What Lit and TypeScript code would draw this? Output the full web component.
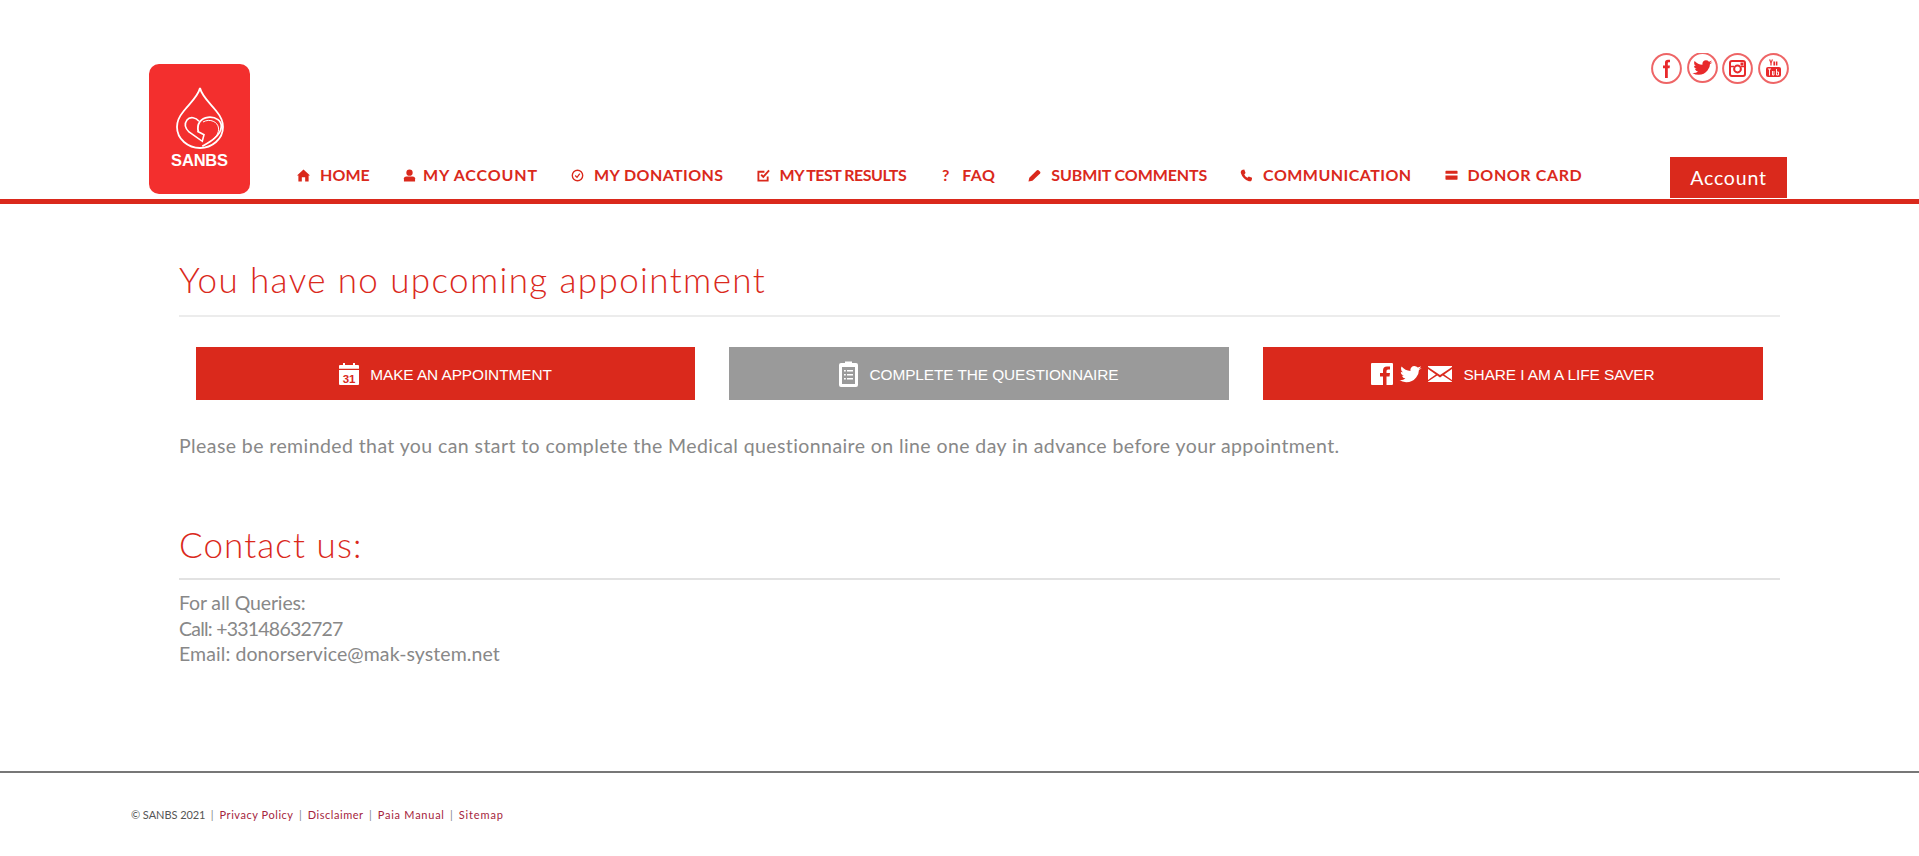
import { LitElement, html, css, svg } from "lit";
import { customElement } from "lit/decorators.js";

const navIcons = {
  home: svg`<path d="M7 0.5 L14 7 L12.5 7 L12.5 13.5 L8.8 13.5 L8.8 9 L5.2 9 L5.2 13.5 L1.5 13.5 L1.5 7 L0 7 Z"/>`,
  user: svg`<circle cx="7" cy="4" r="3.4"/><path d="M1 13.5 L1 10 Q1 8 3.6 8 L10.4 8 Q13 8 13 10 L13 13.5 Z"/>`,
  clock: svg`<circle cx="7" cy="7" r="5.6" fill="none" stroke="currentColor" stroke-width="1.5"/><path d="M4.5 7 L6.5 9 L9.5 5" fill="none" stroke="currentColor" stroke-width="1.4"/>`,
  check: svg`<path d="M11.5 8 L11.5 12.5 L1.5 12.5 L1.5 3 L8 3" fill="none" stroke="currentColor" stroke-width="2"/><path d="M4.5 6.2 L6.8 8.5 L13 1.5" fill="none" stroke="currentColor" stroke-width="2"/>`,
  pencil: svg`<path d="M0.5 13.5 L1.4 9.4 L9.6 1.4 Q10.5 0.6 11.4 1.4 L13 3 Q13.8 4 13 4.8 L4.8 12.6 Z"/>`,
  phone: svg`<path d="M2 1 L4.6 0.5 L6 4.4 L4.6 5.8 Q5.6 8.2 8 9.4 L9.4 8 L13 9.4 L12.6 12 Q11.6 13.6 9.6 13.2 Q3 11 0.8 4 Q0.6 2.2 2 1 Z"/>`,
  card: svg`<path d="M0.5 2.5 Q0.5 2 1.1 2 L12.9 2 Q13.5 2 13.5 2.5 L13.5 5 L0.5 5 Z M0.5 7 L13.5 7 L13.5 11 Q13.5 11.5 12.9 11.5 L1.1 11.5 Q0.5 11.5 0.5 11 Z"/>`,
};

const nav: [string, keyof typeof navIcons | null, number, boolean][] = [
  ["HOME", "home", 0.08, false],
  ["MY ACCOUNT", "user", 0.87, true],
  ["MY DONATIONS", "clock", 0.42, false],
  ["MY TEST RESULTS", "check", -0.5, false],
  ["FAQ", null, 0.43, false],
  ["SUBMIT COMMENTS", "pencil", -0.11, false],
  ["COMMUNICATION", "phone", 0.45, false],
  ["DONOR CARD", "card", 0.61, false],
];

const fGlyph = svg`<path d="M16.6 8.6 Q16.6 5.8 19.6 5.8 L21.6 5.8 L21.6 8.3 L20.2 8.3 Q19.4 8.3 19.4 9.2 L19.4 11.6 L21.5 11.6 L21.2 14.2 L19.4 14.2 L19.4 24 L16.6 24 L16.6 14.2 L14.6 14.2 L14.6 11.6 L16.6 11.6 Z"/>`;
const birdPath =
  "M24 7.2 Q22.6 7.8 21.4 8 Q22.8 7.1 23.3 5.6 Q22 6.4 20.5 6.7 Q19.2 5.3 17.4 5.3 Q14.2 5.6 13.9 8.8 Q13.9 9.3 14 9.8 Q9.2 9.5 6.1 5.9 Q5.6 6.8 5.6 7.9 Q5.6 9.9 7.2 11 Q6.2 11 5.4 10.5 Q5.4 13.2 8.1 14 Q7.2 14.2 6.4 14 Q7.2 16.2 9.5 16.4 Q7.4 18.2 4.6 18 Q4.2 18 3.9 17.9 Q6.8 19.8 10.2 19.8 Q15.8 19.8 19 15.6 Q21.6 12.2 21.5 8.9 Q23 8.2 24 7.2 Z";

@customElement("app-root")
export class AppRoot extends LitElement {
  static styles = css`
    :host {
      display: flex;
      flex-direction: column;
      background: #fff;
      color: #888;
      font-family: Lato, "Open Sans", sans-serif;
      height: 856px;
      overflow: hidden;
    }
    .header {
      height: 199px;
      flex: none;
      border-bottom: 5px solid #da291c;
      padding: 0 132px 0 149px;
      display: flex;
      align-items: flex-end;
    }
    .logo {
      width: 101px;
      height: 130px;
      background: #f32f2e;
      border-radius: 10px;
      margin-bottom: 5px;
      flex: none;
      display: flex;
      flex-direction: column;
      align-items: center;
      color: #fff;
    }
    .logo svg { margin-top: 23px; display: block; }
    .logo span {
      font: bold 16.5px "Liberation Sans", sans-serif;
      letter-spacing: -0.2px;
      margin-top: 2px;
      line-height: 18px;
    }
    .nav {
      display: flex;
      gap: 33px;
      margin-left: 47px;
      margin-bottom: 14px;
      flex: none;
    }
    .nav-item {
      display: flex;
      align-items: center;
      gap: 10px;
      color: #da291c;
      font-weight: 700;
      font-size: 16px;
      line-height: 20px;
      white-space: nowrap;
    }
    .nav-item.tight { gap: 7px; }
    .nav-icon { width: 13px; height: 13px; fill: currentColor; flex: none; }
    .q { width: 13px; text-align: center; font-size: 16px; }
    .right {
      margin-left: auto;
      display: flex;
      flex-direction: column;
      align-items: flex-end;
      height: 100%;
      flex: none;
    }
    .social { display: flex; gap: 4.7px; margin-top: 52.5px; margin-right: -2px; }
    .social svg { width: 31px; height: 31px; display: block; color: #e8292b; }
    .ring { fill: none; stroke: currentColor; stroke-opacity: 0.72; stroke-width: 2; }
    .account {
      margin-top: auto;
      margin-bottom: 1px;
      width: 117px;
      height: 41px;
      background: #da291c;
      color: #fff;
      font-size: 19.5px;
      font-weight: 400;
      letter-spacing: 0.8px;
      display: flex;
      align-items: center;
      justify-content: center;
    }
    .main { padding: 0 139px 0 179px; }
    h2 {
      margin: 0;
      font-weight: 300;
      color: #da291c;
      font-size: 35px;
      line-height: 44px;
      border-bottom: 2px solid #ececec;
    }
    h2.first { padding: 53px 0 14px; letter-spacing: 1.39px; }
    h2.second {
      margin-top: 64px;
      padding: 0 0 12px;
      letter-spacing: 1.1px;
      border-bottom-color: #e2e2e2;
    }
    .buttons {
      display: grid;
      grid-template-columns: 499px 500px 500px;
      gap: 34px;
      padding: 30px 17px 0;
    }
    .btn {
      height: 53px;
      background: #da291c;
      color: #fff;
      display: flex;
      align-items: center;
      justify-content: center;
      gap: 11px;
      font: 15.4px "Liberation Sans", sans-serif;
      letter-spacing: -0.08px;
    }
    .btn span { padding-top: 2px; }
    .btn.gray { background: #9a9a9a; }
    .btn svg { display: block; fill: #fff; }
    .icons { display: flex; gap: 6px; align-items: center; }
    p {
      margin: 0;
      font-size: 19.5px;
      line-height: 25px;
      font-weight: 400;
    }
    .note { margin-top: 33px; letter-spacing: 0.41px; }
    .contact { margin-top: 10px; line-height: 25.5px; }
    .l1 { letter-spacing: -0.14px; }
    .l2 { letter-spacing: -0.77px; }
    .l3 { letter-spacing: 0.08px; }
    .footer {
      margin-top: auto;
      box-sizing: border-box;
      height: 85px;
      flex: none;
      border-top: 2px solid #777;
      padding: 33px 0 0 131px;
      font-size: 11px;
      line-height: 18px;
      color: #555;
      letter-spacing: 0.55px;
    }
    .copy { letter-spacing: -0.05px; }
    .footer a { color: #a5243c; text-decoration: none; }
    .sep { color: #888; margin: 0 5.4px; }
    .paia { letter-spacing: 0.75px; }
    .sitemap { letter-spacing: 0.85px; }
  `;

  render() {
    return html`
      <div class="header">
        <div class="logo">
          <svg width="50" height="62" viewBox="0 0 50 62" fill="none" stroke="#fff">
            <path d="M25 1 C27 10 37 18 42 25 C47 31 48 36 48 40 C48 52 37 61 25 61 C13 61 2 52 2 40 C2 36 3 31 8 25 C13 18 23 10 25 1 Z" stroke-width="1.8"/>
            <path d="M23.3 44.3 C21.5 37 26 31 33 30.3 C41 29.5 47 34 46.3 40 C45.5 49 35 55 27.3 59.3" stroke-width="1.8"/>
            <path d="M24 34.3 C21 30.5 15 29 12 33 C9 37 10.5 41.5 14 45 L27.3 54.3 L29 47.7 L22.3 44.3" stroke-width="1.6"/>
            <path d="M28 35 C35 31 43 35 43.5 41 C44 46 41 50 38 52" stroke-width="1"/>
          </svg>
          <span>SANBS</span>
        </div>
        <div class="nav">
          ${nav.map(
            ([label, icon, ls, tight]) => html`<div class="nav-item ${tight ? "tight" : ""}">
              ${icon
                ? html`<svg class="nav-icon" viewBox="0 0 14 14">${navIcons[icon]}</svg>`
                : html`<span class="q">?</span>`}
              <span style="letter-spacing:${ls}px">${label}</span>
            </div>`
          )}
        </div>
        <div class="right">
          <div class="social">
            <svg viewBox="0 0 31 31" fill="currentColor">
              <circle class="ring" cx="15.5" cy="15.5" r="14.4"/>
              <g transform="translate(-2.6 1)">${fGlyph}</g>
            </svg>
            <svg viewBox="0 0 31 31" fill="currentColor">
              <circle class="ring" cx="15.5" cy="14.5" r="14.4"/>
              <g transform="translate(1.5 2)"><path d="${birdPath}"/></g>
            </svg>
            <svg viewBox="0 0 31 31" fill="none" stroke="currentColor">
              <circle class="ring" cx="15.5" cy="15.5" r="14.4"/>
              <rect x="8" y="8" width="15" height="15" rx="2" stroke-width="2"/>
              <circle cx="15.5" cy="16" r="3.4" stroke-width="2"/>
              <rect x="18.5" y="9.5" width="3" height="3" fill="currentColor" stroke="none"/>
              <path d="M8 13.5 H12 M19 13.5 H23" stroke-width="1.4"/>
            </svg>
            <svg viewBox="0 0 31 31" fill="currentColor">
              <circle class="ring" cx="15.5" cy="15.5" r="14.4"/>
              <path d="M11 6.5 L12.4 6.5 L13 9 L13.7 6.5 L15 6.5 L13.6 10 L13.6 12.5 L12.4 12.5 L12.4 10 Z M15.4 8.5 L17 8.5 L17 12.5 L15.4 12.5 Z M17.8 8.5 L19.4 8.5 L19.4 12.5 L17.8 12.5 Z"/>
              <rect x="8" y="14" width="15" height="10" rx="2"/>
              <path d="M10 16 H13 M11.5 16 V22.5 M14.5 18 V22 H16 V18 M18.5 16 V22 H20.5 V19 H18.5" fill="none" stroke="#fff" stroke-width=".9"/>
            </svg>
          </div>
          <div class="account">Account</div>
        </div>
      </div>

      <div class="main">
        <h2 class="first">You have no upcoming appointment</h2>
        <div class="buttons">
          <div class="btn">
            <svg width="20" height="22" viewBox="0 0 20 22">
              <path d="M1 2 H4 V0 H6 V2 H14 V0 H16 V2 H19 Q20 2 20 3 V5.8 H0 V3 Q0 2 1 2 Z"/>
              <path d="M0 7 H20 V21 Q20 22 19 22 H1 Q0 22 0 21 Z"/>
              <text x="10" y="19.5" text-anchor="middle" font-family="Liberation Sans" font-weight="700" font-size="11.5" fill="#da291c">31</text>
            </svg>
            <span>MAKE AN APPOINTMENT</span>
          </div>
          <div class="btn gray">
            <svg width="19" height="26" viewBox="0 0 19 26">
              <path fill-rule="evenodd" d="M6 2 V0.5 H13 V2 H17 Q19 2 19 4 V24 Q19 26 17 26 H2 Q0 26 0 24 V4 Q0 2 2 2 Z M3 6 V23 H16 V6 Z"/>
              <path d="M5 9 H6.8 V10.6 H5 Z M8 9 H14 V10.6 H8 Z M5 13 H6.8 V14.6 H5 Z M8 13 H14 V14.6 H8 Z M5 17 H6.8 V18.6 H5 Z M8 17 H14 V18.6 H8 Z"/>
            </svg>
            <span>COMPLETE THE QUESTIONNAIRE</span>
          </div>
          <div class="btn">
            <div class="icons">
              <svg width="22" height="22" viewBox="0 0 22 22">
                <path d="M1 0 H21 Q22 0 22 1 V21 Q22 22 21 22 H15.5 V13.5 H18.5 L19 10 H15.5 V8 Q15.5 6.5 17 6.5 H19 V3.5 H16 Q12 3.5 12 7.5 V10 H9 V13.5 H12 V22 H1 Q0 22 0 21 V1 Q0 0 1 0 Z"/>
              </svg>
              <svg width="23" height="18" viewBox="3.8 5 20.4 15">
                <path d="${birdPath}"/>
              </svg>
              <svg width="24" height="16" viewBox="0 0 24 16">
                <path d="M0 1 L0 0 H24 V1 L12 9 Z M0 3 L7.8 8.4 L0 14 Z M24 3 L16.2 8.4 L24 14 Z M0 16 V15.5 L9.2 9.6 L12 11.4 L14.8 9.6 L24 15.5 V16 Z"/>
              </svg>
            </div>
            <span>SHARE I AM A LIFE SAVER</span>
          </div>
        </div>
        <p class="note">Please be reminded that you can start to complete the Medical questionnaire on line one day in advance before your appointment.</p>
        <h2 class="second">Contact us:</h2>
        <p class="contact"><span class="l1">For all Queries:</span><br /><span class="l2">Call: +33148632727</span><br /><span class="l3">Email: donorservice@mak-system.net</span></p>
      </div>

      <div class="footer">
        <span class="copy">© SANBS 2021</span><span class="sep">|</span><a>Privacy Policy</a><span class="sep">|</span><a>Disclaimer</a><span class="sep">|</span><a class="paia">Paia Manual</a><span class="sep">|</span><a class="sitemap">Sitemap</a>
      </div>
    `;
  }
}
